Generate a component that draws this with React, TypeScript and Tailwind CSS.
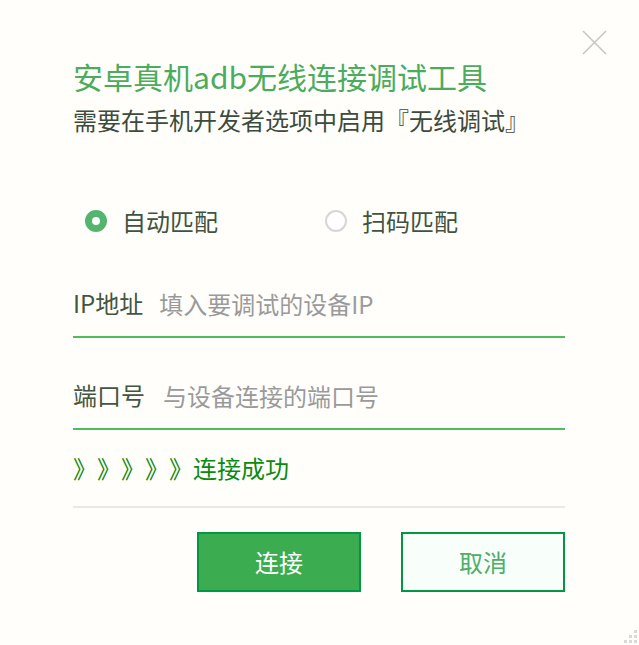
import { useState } from 'react'

const font = { fontFamily: '"Noto Sans CJK SC", "Noto Sans", sans-serif' }

function Radio({ checked, label, onClick }: { checked: boolean; label: string; onClick: () => void }) {
  return (
    <button type="button" onClick={onClick} className="flex items-center h-6 gap-[15px]">
      {checked ? (
        <span className="w-[22px] h-[22px] rounded-full bg-[#55b46e] flex items-center justify-center">
          <span className="w-[8px] h-[8px] rounded-full bg-white" />
        </span>
      ) : (
        <span className="w-[22px] h-[22px] rounded-full border-2 border-[#d6d6d6] bg-white" />
      )}
      <span className="text-[24px] leading-none text-[#3f5340]">{label}</span>
    </button>
  )
}

function Field({ label, placeholder, gap }: { label: string; placeholder: string; gap: string }) {
  return (
    <div className="flex items-center h-[68px] border-b-2 border-[#4cbf5c]">
      <span className="text-[24px] leading-none text-[#435640] shrink-0">{label}</span>
      <input
        placeholder={placeholder}
        className={`${gap} flex-1 bg-transparent outline-none text-[24px] leading-none text-[#333] placeholder:text-[#9a9a9a]`}
        style={font}
      />
    </div>
  )
}

export default function App() {
  const [mode, setMode] = useState<'auto' | 'qr'>('auto')

  return (
    <div className="relative w-[639px] h-[645px] bg-[#fffefb] overflow-hidden" style={font}>
      {/* close */}
      <button type="button" className="absolute left-[582px] top-[30px] w-[25px] h-[25px]">
        <svg viewBox="0 0 25 25" className="w-[25px] h-[25px]">
          <path d="M1 1 L24 24 M24 1 L1 24" stroke="#c6c6c6" strokeWidth="1.6" fill="none" />
        </svg>
      </button>

      <div className="ml-[73px] w-[492px] pt-[61px]">
        <h1 className="text-[30px] leading-[30px] text-[#4aac5c] whitespace-nowrap">安卓真机adb无线连接调试工具</h1>
        <p className="mt-[17px] text-[24px] leading-[24px] text-[#3c4b3c] whitespace-nowrap">
          需要在手机开发者选项中启用『无线调试』
        </p>

        <div className="mt-[77px] flex pl-[12px]">
          <div className="w-[240px]">
            <Radio checked={mode === 'auto'} label="自动匹配" onClick={() => setMode('auto')} />
          </div>
          <Radio checked={mode === 'qr'} label="扫码匹配" onClick={() => setMode('qr')} />
        </div>

        <div className="mt-[37px]">
          <Field label="IP地址" placeholder="填入要调试的设备IP" gap="ml-4" />
        </div>
        <div className="mt-[24px]">
          <Field label="端口号" placeholder="与设备连接的端口号" gap="ml-[18px]" />
        </div>

        <div className="flex items-center h-[78px] border-b-2 border-[#e8e8e8] text-[24px] leading-none text-[#0b8a12]">
          {[0, 1, 2, 3, 4].map((i) => (
            <span key={i} className="inline-block w-[24px]">》</span>
          ))}
          <span>连接成功</span>
        </div>

        <div className="mt-[24px] flex justify-end gap-[40px]">
          <button
            type="button"
            className="w-[164px] h-[60px] bg-[#3bad50] border-2 border-[#019744] text-white text-[24px]"
          >
            连接
          </button>
          <button
            type="button"
            className="w-[164px] h-[60px] bg-[#f8fffa] border-2 border-[#019744] text-[#4cae68] text-[24px]"
          >
            取消
          </button>
        </div>
      </div>

      {/* resize grip */}
      <div className="absolute right-[2px] bottom-[2px] grid grid-cols-3 gap-[2px]">
        <span className="w-[3px] h-[3px]" />
        <span className="w-[3px] h-[3px]" />
        <span className="w-[3px] h-[3px] bg-[#d9d9d9]" />
        <span className="w-[3px] h-[3px]" />
        <span className="w-[3px] h-[3px] bg-[#d9d9d9]" />
        <span className="w-[3px] h-[3px] bg-[#d9d9d9]" />
        <span className="w-[3px] h-[3px] bg-[#d9d9d9]" />
        <span className="w-[3px] h-[3px] bg-[#d9d9d9]" />
        <span className="w-[3px] h-[3px] bg-[#d9d9d9]" />
      </div>
    </div>
  )
}
